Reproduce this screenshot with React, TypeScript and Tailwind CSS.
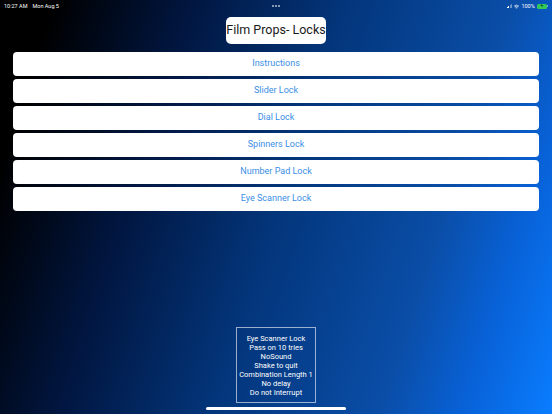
import { Wifi } from "lucide-react";

const locks = [
  "Instructions",
  "Slider Lock",
  "Dial Lock",
  "Spinners Lock",
  "Number Pad Lock",
  "Eye Scanner Lock",
];

const settings = [
  "Eye Scanner Lock",
  "Pass on 10 tries",
  "NoSound",
  "Shake to quit",
  "Combination Length 1",
  "No delay",
  "Do not Interrupt",
];

const StatusBar = () => (
  <div className="flex h-[12px] items-center justify-between px-[4px] text-[5.5px] text-white">
    <div className="flex w-[90px] gap-[5px]">
      <span>10:27 AM</span>
      <span>Mon Aug 5</span>
    </div>
    <div className="flex gap-[1.5px]">
      <span className="h-[1.5px] w-[1.5px] rounded-full bg-white/70" />
      <span className="h-[1.5px] w-[1.5px] rounded-full bg-white/70" />
      <span className="h-[1.5px] w-[1.5px] rounded-full bg-white/70" />
    </div>
    <div className="flex w-[90px] items-center justify-end gap-[2px]">
      <div className="flex items-end gap-[0.5px]">
        <span className="h-[1.5px] w-[1px] bg-white" />
        <span className="h-[2.5px] w-[1px] bg-white" />
        <span className="h-[3.5px] w-[1px] bg-white/40" />
        <span className="h-[4.5px] w-[1px] bg-white/40" />
      </div>
      <Wifi className="h-[5px] w-[5px]" strokeWidth={3} />
      <span>100%</span>
      <div className="flex items-center">
        <div className="flex h-[5px] w-[10px] items-center justify-center rounded-[1.5px] bg-[#34c759] text-[4px] font-bold text-black">
          ϟ
        </div>
        <span className="ml-[0.5px] h-[2px] w-[0.8px] rounded-r bg-white/60" />
      </div>
    </div>
  </div>
);

export default function App() {
  return (
    <div
      className="relative flex h-[414px] w-[552px] flex-col overflow-hidden bg-[linear-gradient(108deg,#000000_0%,#000000_8%,#011640_28%,#03357a_50%,#0a4ea8_75%,#0862d8_87%,#0a7dff_100%)]"
      style={{ fontFamily: "Roboto, 'Liberation Sans', sans-serif" }}
    >
      <StatusBar />

      <div className="mt-[5px] flex justify-center">
        <div className="flex h-[27px] w-[100px] items-center justify-center rounded-[5px] bg-white text-[12.5px] text-[#1a1a1a]">
          Film Props- Locks
        </div>
      </div>

      {/* Lock list */}
      <div className="mt-[8px] flex flex-col gap-[3px] px-[13px]">
        {locks.map((lock) => (
          <button
            key={lock}
            className="flex h-[24px] items-center justify-center rounded-[4px] bg-white text-[9px] text-[#3a8ee6]"
          >
            {lock}
          </button>
        ))}
      </div>

      <div className="flex flex-1 items-end justify-center pb-[11px]">
        <div className="flex w-[80px] flex-col items-center border border-white/60 pt-[6px] pb-[5px] text-[7.5px] leading-[9px] text-white">
          {settings.map((s) => (
            <span key={s}>{s}</span>
          ))}
        </div>
      </div>

      {/* Home indicator */}
      <div className="absolute bottom-[4px] left-[206px] h-[3px] w-[140px] rounded-full bg-white" />
    </div>
  );
}
